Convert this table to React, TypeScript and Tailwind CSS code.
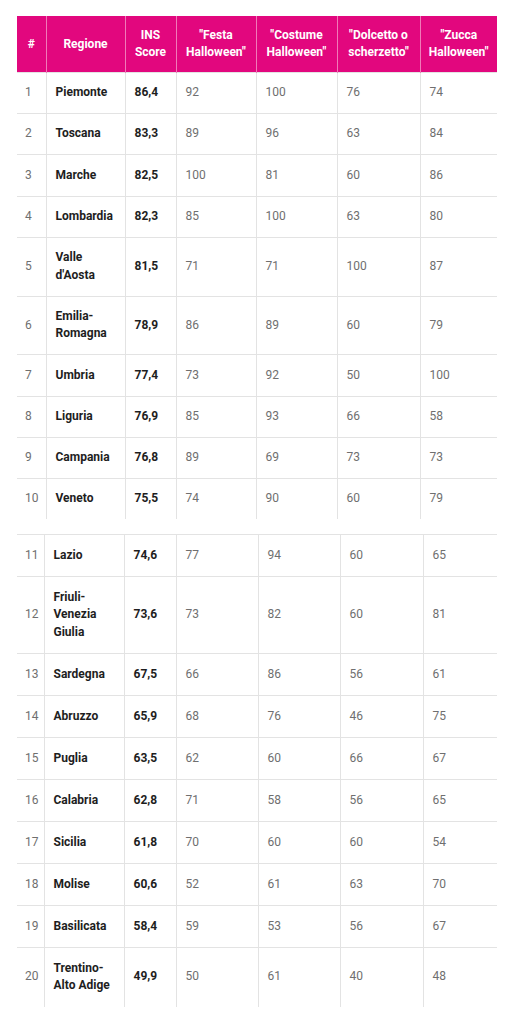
import React from 'react';

type Row = [number, string, string, number, number, number, number];

const top: Row[] = [
  [1, 'Piemonte', '86,4', 92, 100, 76, 74],
  [2, 'Toscana', '83,3', 89, 96, 63, 84],
  [3, 'Marche', '82,5', 100, 81, 60, 86],
  [4, 'Lombardia', '82,3', 85, 100, 63, 80],
  [5, "Valle d'Aosta", '81,5', 71, 71, 100, 87],
  [6, 'Emilia-Romagna', '78,9', 86, 89, 60, 79],
  [7, 'Umbria', '77,4', 73, 92, 50, 100],
  [8, 'Liguria', '76,9', 85, 93, 66, 58],
  [9, 'Campania', '76,8', 89, 69, 73, 73],
  [10, 'Veneto', '75,5', 74, 90, 60, 79],
];

const bottom: Row[] = [
  [11, 'Lazio', '74,6', 77, 94, 60, 65],
  [12, 'Friuli-Venezia Giulia', '73,6', 73, 82, 60, 81],
  [13, 'Sardegna', '67,5', 66, 86, 56, 61],
  [14, 'Abruzzo', '65,9', 68, 76, 46, 75],
  [15, 'Puglia', '63,5', 62, 60, 66, 67],
  [16, 'Calabria', '62,8', 71, 58, 56, 65],
  [17, 'Sicilia', '61,8', 70, 60, 60, 54],
  [18, 'Molise', '60,6', 52, 61, 63, 70],
  [19, 'Basilicata', '58,4', 59, 53, 56, 67],
  [20, 'Trentino-Alto Adige', '49,9', 50, 61, 40, 48],
];

// region names wrap the way the narrow column breaks them
const regionLines: Record<string, string[]> = {
  "Valle d'Aosta": ['Valle', "d'Aosta"],
  'Emilia-Romagna': ['Emilia-', 'Romagna'],
  'Friuli-Venezia Giulia': ['Friuli-', 'Venezia', 'Giulia'],
  'Trentino-Alto Adige': ['Trentino-', 'Alto Adige'],
};

const headers = [
  ['#'],
  ['Regione'],
  ['INS', 'Score'],
  ['"Festa', 'Halloween"'],
  ['"Costume', 'Halloween"'],
  ['"Dolcetto o', 'scherzetto"'],
  ['"Zucca', 'Halloween"'],
];

const cell = 'px-[9px] align-middle border-t border-[#e3e3e3] leading-[17.6px]';

function Table({ rows, widths, head, pad }: { rows: Row[]; widths: number[]; head?: boolean; pad: string }) {
  const td = `${cell} ${pad}`;
  return (
    <table className="table-fixed border-collapse w-[480px] text-[12px]">
      <colgroup>
        {widths.map((w, i) => (
          <col key={i} style={{ width: w }} />
        ))}
      </colgroup>
      {head && (
        <thead>
          <tr className="bg-[#e2077e]">
            {headers.map((h, i) => (
              <th
                key={i}
                className={`py-[11px] px-[4px] text-center font-bold text-white leading-[17px] ${i > 0 ? 'border-l border-[#f07ab8]' : ''}`}
              >
                {h.map((l, j) => (
                  <div key={j}>{l}</div>
                ))}
              </th>
            ))}
          </tr>
        </thead>
      )}
      <tbody>
        {rows.map((r) => (
          <tr key={r[0]}>
            <td className={`${td} pl-[8px] text-[#6f6f6f]`}>{r[0]}</td>
            <td className={`${td} border-l font-bold text-[#1e1e1e]`}>
              {(regionLines[r[1]] || [r[1]]).map((l, j) => (
                <div key={j}>{l}</div>
              ))}
            </td>
            <td className={`${td} border-l font-bold text-[#1e1e1e]`}>{r[2]}</td>
            <td className={`${td} border-l text-[#6f6f6f]`}>{r[3]}</td>
            <td className={`${td} border-l text-[#6f6f6f]`}>{r[4]}</td>
            <td className={`${td} border-l text-[#6f6f6f]`}>{r[5]}</td>
            <td className={`${td} border-l text-[#6f6f6f]`}>{r[6]}</td>
          </tr>
        ))}
      </tbody>
    </table>
  );
}

export default function App() {
  return (
    <div className="w-[508px] h-[1024px] bg-white pt-[16px] pl-[17px] font-['Roboto',sans-serif]">
      <Table rows={top} widths={[29, 79, 51, 80, 81, 83, 77]} head pad="py-[11.3px]" />
      <div className="h-[15px]" />
      <Table rows={bottom} widths={[27, 80, 52, 82, 82, 83, 74]} pad="py-[11.7px]" />
    </div>
  );
}
